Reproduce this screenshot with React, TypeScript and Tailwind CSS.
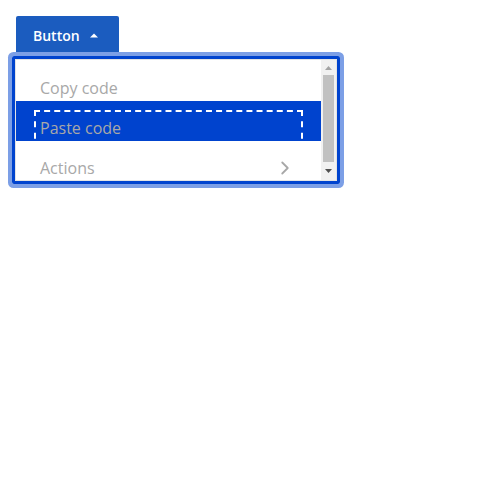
import { ChevronRight } from 'lucide-react'

const items = [
  { label: 'Copy code' },
  { label: 'Paste code', active: true },
  { label: 'Actions', submenu: true }
]

const Caret = () => (
  <svg width="10" height="6" viewBox="0 0 10 6" className="ml-[9px]">
    <path d="M1 5.5 5 1.5 9 5.5Z" fill="#ffffff" />
  </svg>
)

const Arrow = ({ down, color }: { down?: boolean; color: string }) => (
  <svg width="7" height="4" viewBox="0 0 7 4">
    <path d={down ? 'M0 0H7L3.5 4Z' : 'M0 4H7L3.5 0Z'} fill={color} />
  </svg>
)

const MenuItem = ({
  label,
  active,
  submenu
}: {
  label: string
  active?: boolean
  submenu?: boolean
}) => (
  <div
    className={`relative h-10 overflow-hidden pl-6 pr-[25px] pt-[16px] ${
      active ? 'bg-[#0043ce]' : 'bg-white'
    }`}
  >
    {active ? (
      <div className="absolute left-[18px] right-[18px] top-[9px] h-10 border-2 border-dashed border-white" />
    ) : null}
    <div className="flex h-[22px] items-center justify-between text-base leading-[22px] text-[#a8a8a8]">
      <span>{label}</span>
      {submenu ? <ChevronRight size={22} strokeWidth={2} className="text-[#a8a8a8]" /> : null}
    </div>
  </div>
)

export default function App() {
  return (
    <div className="min-h-[500px] bg-white pl-4 pt-4 font-['Open_Sans',sans-serif]">
      <button className="flex h-10 w-[103px] items-start rounded-t-[2px] bg-[#1b5cbf] pl-[17px] pt-[10px] text-sm font-semibold leading-5 text-white">
        Button
        <span className="mt-[6px]">
          <Caret />
        </span>
      </button>
      <div className="relative -ml-1 w-[328px] rounded-[2px] border-[3px] border-[#0043ce] ring-4 ring-[#7c9fe6]">
        <div className="flex h-[122px] border border-[#e4e4e4]">
          <div className="flex-1 overflow-hidden pt-px">
            {items.map((item) => (
              <MenuItem key={item.label} {...item} />
            ))}
          </div>
          <div className="flex w-[15px] flex-col bg-[#f1f1f1]">
            <div className="flex h-[15px] items-center justify-center">
              <Arrow color="#a3a3a3" />
            </div>
            <div className="mx-[2px] h-[87px] bg-[#c1c1c1]" />
            <div className="flex flex-1 items-center justify-center">
              <Arrow down color="#505050" />
            </div>
          </div>
        </div>
      </div>
    </div>
  )
}
